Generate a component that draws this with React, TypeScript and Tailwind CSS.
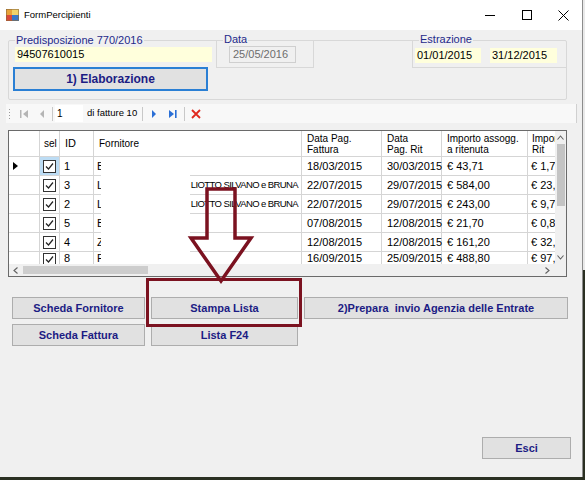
import React from 'react';

const ui = { fontFamily: '"Liberation Sans", Arial, sans-serif' };
const grid = { fontFamily: '"Liberation Sans", Arial, sans-serif' };
const btn = { fontFamily: '"Liberation Sans", Arial, sans-serif' };

type Row = { sel: boolean; id: number; f: string; tail?: string; df: string; dr: string; imp: string; rit: string };

const rows: Row[] = [
  { sel: true, id: 1, f: 'B', df: '18/03/2015', dr: '30/03/2015', imp: '€ 43,71', rit: '€ 1,75' },
  { sel: true, id: 3, f: 'L', tail: 'LIOTTO SILVANO e BRUNA', df: '22/07/2015', dr: '29/07/2015', imp: '€ 584,00', rit: '€ 23,36' },
  { sel: true, id: 2, f: 'L', tail: 'LIOTTO SILVANO e BRUNA', df: '22/07/2015', dr: '29/07/2015', imp: '€ 243,00', rit: '€ 9,72' },
  { sel: true, id: 5, f: 'B', df: '07/08/2015', dr: '12/08/2015', imp: '€ 21,70', rit: '€ 0,87' },
  { sel: true, id: 4, f: 'Z', df: '12/08/2015', dr: '12/08/2015', imp: '€ 161,20', rit: '€ 32,24' },
  { sel: true, id: 8, f: 'P', df: '16/09/2015', dr: '25/09/2015', imp: '€ 488,80', rit: '€ 97,76' },
];

function Check() {
  return (
    <div className="w-[13px] h-[13px] border border-[#333] bg-white flex items-center justify-center">
      <svg width="9" height="9" viewBox="0 0 9 9">
        <path d="M1 4.5 L3.5 7 L8 1.5" fill="none" stroke="#222" strokeWidth="1.2" />
      </svg>
    </div>
  );
}

function Btn({ label, w }: { label: string; w: string }) {
  return (
    <div
      style={btn}
      className={`${w} h-[22px] flex items-center justify-center bg-[#e1e1e1] border border-[#adadad] text-[11px] font-bold text-[#1c1c84] whitespace-pre`}
    >
      {label}
    </div>
  );
}

function Legend({ children }: { children: React.ReactNode }) {
  return (
    <span className="absolute -top-[8px] left-[6px] px-px bg-[#f0f0f0] text-[11px] leading-[14px] text-[#1e2a8a]">
      {children}
    </span>
  );
}

export default function App() {
  return (
    <div className="w-[585px] h-[480px] relative overflow-hidden bg-[linear-gradient(to_bottom,#e9e9e9_0,#e9e9e9_270px,#2b3022_270px)]" style={ui}>
      <div className="w-[583px] h-[477px] bg-[#f0f0f0] border-r border-[#8c8c8c] flex flex-col">
        {/* title bar */}
        <div className="h-[30px] bg-white flex items-center pl-[6px] shrink-0">
          <svg width="13" height="12" viewBox="0 0 13 12">
            <rect x="0" y="0" width="7" height="6" fill="#e8a33a" />
            <rect x="6" y="0" width="7" height="6" fill="#f2d36b" />
            <rect x="0" y="6" width="7" height="6" fill="#d94a3a" />
            <rect x="6" y="6" width="7" height="6" fill="#3a78c9" />
            <rect x="0.5" y="0.5" width="12" height="11" fill="none" stroke="#8a6a3a" strokeWidth="0.6" />
          </svg>
          <span className="ml-[5px] text-[9.5px] text-black">FormPercipienti</span>
          <div className="ml-auto flex">
            <div className="w-[37px] h-[30px] flex items-center justify-center">
              <div className="w-[10px] h-px bg-black" />
            </div>
            <div className="w-[37px] h-[30px] flex items-center justify-center">
              <div className="w-[10px] h-[10px] border border-black" />
            </div>
            <div className="w-[37px] h-[30px] flex items-center justify-center">
              <svg width="11" height="11" viewBox="0 0 11 11">
                <path d="M0.5 0.5 L10.5 10.5 M10.5 0.5 L0.5 10.5" stroke="#000" strokeWidth="1" />
              </svg>
            </div>
          </div>
        </div>

        {/* top group */}
        <div className="relative ml-[8px] mt-[10px] w-[559px] h-[60px] border border-[#d8d8d8] rounded-[2px] flex">
          <Legend>Predisposizione 770/2016</Legend>
          <div className="pl-[6px] pt-[6px] flex flex-col">
            <div className="w-[197px] h-[15px] bg-[#ffffdc] text-[11px] leading-[15px] pl-[2px] text-black">94507610015</div>
            <div className="mt-[5px] -ml-[2px]">
              <div
                style={btn}
                className="w-[195px] h-[24px] flex items-center justify-center bg-[#e1e1e1] border-2 border-[#2a7fd4] text-[12px] font-bold text-[#1c1c84]"
              >
                1) Elaborazione
              </div>
            </div>
          </div>
          <div className="relative ml-[4px] -mt-px w-[98px] h-[28px] border-x border-b border-[#d8d8d8]">
            <Legend>Data</Legend>
            <div className="ml-[12px] mt-[6px] w-[67px] h-[17px] border border-[#cfcfcf] bg-[#f0f0f0] text-[11px] leading-[15px] text-[#6d6d6d] pl-[3px]">
              25/05/2016
            </div>
          </div>
          <div className="relative ml-auto -mt-px -mr-px w-[155px] h-[28px] border-l border-b border-[#d8d8d8]">
            <Legend>Estrazione</Legend>
            <div className="flex mt-[8px] ml-[2px] gap-[9px]">
              <div className="w-[66px] h-[15px] bg-[#ffffdc] text-[11px] leading-[15px] pl-[2px] text-black">01/01/2015</div>
              <div className="w-[67px] h-[15px] bg-[#ffffdc] text-[11px] leading-[15px] pl-[2px] text-black">31/12/2015</div>
            </div>
          </div>
        </div>

        {/* toolbar */}
        <div className="ml-[6px] mt-[4px] w-[571px] h-[19px] bg-[#f8f8f8] border-r border-[#d0d0d0] flex items-center">
          <div className="ml-[3px] flex flex-col gap-[2px]">
            {[0, 1, 2, 3].map((i) => (
              <div key={i} className="w-px h-px bg-[#9a9a9a]" />
            ))}
          </div>
          <svg className="ml-[10px]" width="9" height="10" viewBox="0 0 9 10">
            <rect x="0" y="1" width="1.5" height="8" fill="#b5b5b5" />
            <path d="M8 1 L3 5 L8 9 Z" fill="#b5b5b5" />
          </svg>
          <svg className="ml-[10px]" width="6" height="10" viewBox="0 0 6 10">
            <path d="M5 1 L1 5 L5 9 Z" fill="#b5b5b5" />
          </svg>
          <div className="ml-[7px] w-px h-[14px] bg-[#c8c8c8]" />
          <div className="ml-[2px] w-[28px] h-[17px] bg-white text-[10px] leading-[17px] pl-[2px]">1</div>
          <span className="ml-[4px] text-[9.5px] text-black">di fatture 10</span>
          <div className="ml-[5px] w-px h-[14px] bg-[#c8c8c8]" />
          <svg className="ml-[8px]" width="6" height="10" viewBox="0 0 6 10">
            <path d="M1 1 L5 5 L1 9 Z" fill="#2a6fd6" />
          </svg>
          <svg className="ml-[11px]" width="9" height="10" viewBox="0 0 9 10">
            <path d="M1 1 L6 5 L1 9 Z" fill="#2a6fd6" />
            <rect x="7" y="1" width="1.6" height="8" fill="#2a6fd6" />
          </svg>
          <div className="ml-[7px] w-px h-[14px] bg-[#c8c8c8]" />
          <svg className="ml-[6px]" width="10" height="10" viewBox="0 0 10 10">
            <path d="M1 1 L9 9 M9 1 L1 9" stroke="#e0281e" strokeWidth="1.8" />
          </svg>
        </div>

        {/* grid */}
        <div style={grid} className="relative ml-[8px] mt-[7px] w-[559px] h-[147px] border border-[#6a6a6a] bg-white flex flex-col">
          <div className="flex h-[133px]">
            <div className="w-[546px] overflow-hidden">
              <div className="flex h-[26px] border-b border-[#d5d5d5] text-[10px] leading-[11px] text-black">
                <div className="w-[31px] border-r border-[#d5d5d5]" />
                <div className="w-[20px] border-r border-[#d5d5d5] flex items-center pl-[4px]">sel</div>
                <div className="w-[34px] border-r border-[#d5d5d5] flex items-center pl-[5px] text-[11px]">ID</div>
                <div className="w-[208px] border-r border-[#d5d5d5] flex items-center pl-[5px]">Fornitore</div>
                <div className="w-[80px] border-r border-[#d5d5d5] flex items-center pl-[5px]">Data Pag.<br />Fattura</div>
                <div className="w-[60px] border-r border-[#d5d5d5] flex items-center pl-[5px]">Data<br />Pag. Rit</div>
                <div className="w-[86px] border-r border-[#d5d5d5] flex items-center pl-[5px]">Importo assogg.<br />a ritenuta</div>
                <div className="w-[27px] flex items-center pl-[4px] whitespace-nowrap overflow-hidden">Import<br />Rit</div>
              </div>
              {rows.map((r, i) => (
                <div
                  key={r.id}
                  className={`flex h-[19px] border-b border-[#d5d5d5] text-[11px] text-black whitespace-nowrap ${i === 5 ? 'leading-[11px]' : ''}`}
                >
                  <div className="w-[31px] border-r border-[#d5d5d5] flex items-center pl-[4px]">
                    {i === 0 && (
                      <svg width="5" height="8" viewBox="0 0 5 8">
                        <path d="M0 0 L5 4 L0 8 Z" fill="#000" />
                      </svg>
                    )}
                  </div>
                  <div className={`w-[20px] border-r border-[#d5d5d5] flex justify-center ${i === 0 ? 'bg-[#bcdcf4]' : ''} ${i === 5 ? 'items-start pt-[1px]' : 'items-center'}`}>
                    {r.sel && <Check />}
                  </div>
                  <div className={`w-[34px] border-r border-[#d5d5d5] flex pl-[4px] ${i === 5 ? 'items-start pt-[1px]' : 'items-center'}`}>{r.id}</div>
                  <div className={`w-[208px] border-r border-[#d5d5d5] flex pl-[3px] overflow-hidden ${i === 5 ? 'items-start pt-[1px]' : 'items-center'}`}>
                    <span>{r.f}</span>
                    {r.tail && <span className="ml-auto pr-[3px] text-[9.5px] tracking-[-0.6px]">{r.tail}</span>}
                  </div>
                  <div className={`w-[80px] border-r border-[#d5d5d5] flex pl-[5px] ${i === 5 ? 'items-start pt-[1px]' : 'items-center'}`}>{r.df}</div>
                  <div className={`w-[60px] border-r border-[#d5d5d5] flex pl-[5px] ${i === 5 ? 'items-start pt-[1px]' : 'items-center'}`}>{r.dr}</div>
                  <div className={`w-[86px] border-r border-[#d5d5d5] flex pl-[5px] ${i === 5 ? 'items-start pt-[1px]' : 'items-center'}`}>{r.imp}</div>
                  <div className={`w-[27px] flex pl-[3px] overflow-hidden ${i === 5 ? 'items-start pt-[1px]' : 'items-center'}`}>{r.rit}</div>
                </div>
              ))}
            </div>
            <div className="w-[11px] bg-[#f0f0f0] flex flex-col items-center">
              <svg className="mt-[4px]" width="7" height="5" viewBox="0 0 7 5">
                <path d="M0.5 4.5 L3.5 1 L6.5 4.5" fill="none" stroke="#606060" strokeWidth="1.1" />
              </svg>
              <div className="mt-[4px] w-[8px] h-[62px] bg-[#c4c4c4]" />
              <svg className="mt-auto mb-[4px]" width="7" height="5" viewBox="0 0 7 5">
                <path d="M0.5 0.5 L3.5 4 L6.5 0.5" fill="none" stroke="#606060" strokeWidth="1.1" />
              </svg>
            </div>
          </div>
          <div className="flex h-[12px]">
            <div className="w-[546px] bg-[#f0f0f0] flex items-center">
              <svg className="ml-[4px]" width="5" height="7" viewBox="0 0 5 7">
                <path d="M4.5 0.5 L1 3.5 L4.5 6.5" fill="none" stroke="#606060" strokeWidth="1.1" />
              </svg>
              <div className="ml-[5px] w-[125px] h-[8px] bg-[#cdcdcd]" />
              <svg className="ml-auto mr-[5px]" width="5" height="7" viewBox="0 0 5 7">
                <path d="M0.5 0.5 L4 3.5 L0.5 6.5" fill="none" stroke="#606060" strokeWidth="1.1" />
              </svg>
            </div>
            <div className="w-[11px] bg-[#f0f0f0]" />
          </div>
          {/* redacted names */}
          <div className="absolute left-[92px] top-[27px] w-[89px] h-[106px] bg-white" />
        </div>

        {/* buttons */}
        <div className="ml-[12px] mt-[20px] flex gap-[6px]">
          <Btn label="Scheda Fornitore" w="w-[133px]" />
          <Btn label="Stampa Lista" w="w-[147px]" />
          <Btn label="2)Prepara  invio Agenzia delle Entrate" w="w-[264px]" />
        </div>
        <div className="ml-[12px] mt-[5px] flex gap-[6px]">
          <Btn label="Scheda Fattura" w="w-[133px]" />
          <Btn label="Lista F24" w="w-[147px]" />
        </div>

        <div className="mt-auto mb-[18px] self-end mr-[11px]">
          <Btn label="Esci" w="w-[89px]" />
        </div>
      </div>

      {/* callout overlay */}
      <div className="absolute left-[146px] top-[278px] w-[156px] h-[49px] border-[3px] border-[#7b1220]" />
      <svg className="absolute left-0 top-0 pointer-events-none" width="585" height="480" viewBox="0 0 585 480">
        <path
          d="M207 189 L235 189 L235 238 L251 238 L221 281 L191 238 L207 238 Z"
          fill="none"
          stroke="#7b1220"
          strokeWidth="3.5"
          strokeLinejoin="miter"
        />
      </svg>
    </div>
  );
}
